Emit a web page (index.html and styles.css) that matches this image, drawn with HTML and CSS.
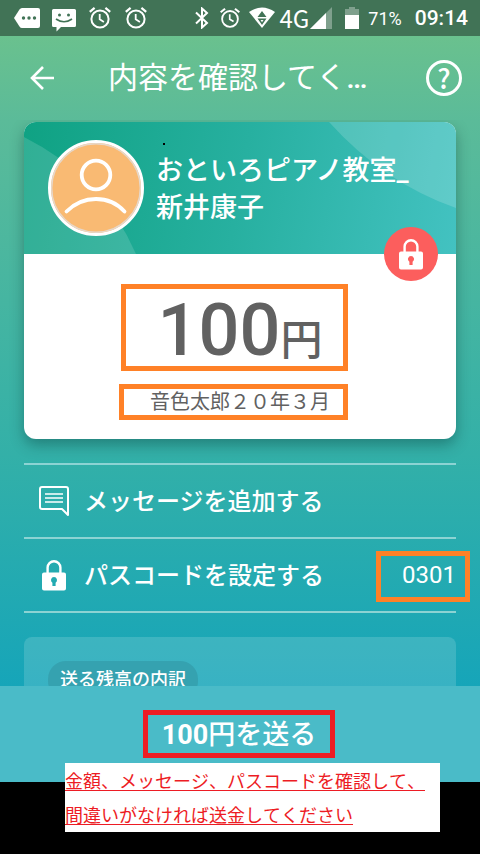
FILE: index.html
```html
<!DOCTYPE html>
<html lang="ja">
<head>
<meta charset="utf-8">
<meta name="viewport" content="width=device-width, initial-scale=1">
<title>内容を確認してください</title>
<link rel="stylesheet" href="styles.css">
</head>
<body>
<svg class="sprite" width="0" height="0" aria-hidden="true">
  <symbol id="alarm" viewBox="0 0 24 24">
    <circle cx="12" cy="13" r="8.6" fill="none" stroke="currentColor" stroke-width="2"/>
    <path d="M1.8 5.800 6.600 1.800M22.200 5.800 17.400 1.800" fill="none" stroke="currentColor" stroke-width="2.200"/>
    <path d="M11.700 8v5.300l4.200 2.600" fill="none" stroke="currentColor" stroke-width="1.800"/>
  </symbol>
  <symbol id="lock" viewBox="0 0 24 31">
    <path d="M5.600 14V7.600a6.400 6.400 0 0 1 12.800 0V14" fill="none" stroke="currentColor" stroke-width="2.400"/>
    <path fill="currentColor" fill-rule="evenodd" d="M2 12.500h20a2 2 0 0 1 2 2V28.500a2 2 0 0 1-2 2H2a2 2 0 0 1-2-2V14.500a2 2 0 0 1 2-2ZM12 17a3.100 3.100 0 0 0-1.600 5.700V26h3.200v-3.300A3.100 3.100 0 0 0 12 17Z"/>
  </symbol>
</svg>
<div class="status">
  <div class="notices">
    <svg width="26" height="20" viewBox="0 0 26 20"><path fill="#fff" d="M8 0h16a2 2 0 0 1 2 2v16a2 2 0 0 1-2 2H8q-1.500 0-2.500-1.500L0 10 5.500 1.500Q6.500 0 8 0Z"/><g fill="#417356"><circle cx="9.500" cy="10" r="1.700"/><circle cx="15" cy="10" r="1.700"/><circle cx="20.500" cy="10" r="1.700"/></g></svg>
    <svg class="sms" width="24" height="23" viewBox="0 0 24 23"><path fill="#fff" d="M1.500 0h21A1.500 1.500 0 0 1 24 1.500v15a1.500 1.500 0 0 1-1.500 1.500H9l-4.500 4.500V18h-3A1.500 1.500 0 0 1 0 16.500v-15A1.500 1.500 0 0 1 1.500 0Z"/><circle cx="7.500" cy="6" r="1.500" fill="#417356"/><circle cx="16.500" cy="6" r="1.500" fill="#417356"/><path d="M4 10q8 5.500 16 0" fill="none" stroke="#417356" stroke-width="1.700"/></svg>
    <svg width="24" height="24"><use href="#alarm"/></svg>
    <svg width="24" height="24"><use href="#alarm"/></svg>
  </div>
  <div class="system">
    <svg width="14" height="22" viewBox="0 0 14 22"><path d="M1 5.500 12 16l-5 4.500V1.500L12 6 1 16.500" fill="none" stroke="#fff" stroke-width="2"/></svg>
    <svg class="clock" width="22" height="24"><use href="#alarm"/></svg>
    <svg class="wifi" width="26" height="22" viewBox="0 0 26 22"><path fill="#fff" d="M0 5Q13-4 26 5L13 21Z"/><path fill="#417356" d="m13 4 4.500 6h-9ZM8.500 11.500h9L13 18Z"/><path fill="#fff" d="M11.500 13h3L13 15.200Z"/></svg>
    <span class="net">4G</span>
    <svg width="22" height="22" viewBox="0 0 22 22"><path fill="#7fa08d" d="M22 0v22H0Z"/><path fill="#fff" d="M16 6v16H0Z"/></svg>
    <svg class="battery" width="14" height="22" viewBox="0 0 14 22"><path fill="#7fa08d" d="M4 0h6v2h4v6H0V2h4Z"/><path fill="#fff" d="M0 8h14v14H0Z"/></svg>
    <span class="percent">71%</span>
    <time class="time">09:14</time>
  </div>
</div>
<header class="bar">
  <button class="back" aria-label="戻る"><svg width="24" height="24" viewBox="0 0 24 24"><path d="M24 12H2M13 1 2 12l11 11" fill="none" stroke="#fff" stroke-width="2.600"/></svg></button>
  <h1>内容を確認してく<b>…</b></h1>
  <button class="help" aria-label="ヘルプ">?</button>
</header>
<main>
  <section class="card">
    <div class="payee">
      <svg class="waves" viewBox="0 0 432 132" preserveAspectRatio="none" aria-hidden="true"><path fill="#fff" fill-opacity=".14" d="M0 15Q78 54 112 132H0Z"/><path fill="#fff" fill-opacity=".16" d="M305 0Q360 61 432 86V0Z"/></svg>
      <svg class="avatar" width="96" height="96" viewBox="0 0 96 96"><circle cx="48" cy="48" r="46.500" fill="#f9ba73" stroke="#fff" stroke-width="3"/><circle cx="48" cy="48" r="44.300" fill="none" stroke="#e6d8cb" stroke-width="1.400"/><circle cx="48" cy="35" r="14.300" fill="none" stroke="#fff" stroke-width="3.800"/><path d="M18.500 71.500Q31 59 48 59T76.500 71.500" fill="none" stroke="#fff" stroke-width="3.800" stroke-linecap="round"/></svg>
      <h2>おといろピアノ教室_<br>新井康子</h2>
      <span class="badge"><svg width="24" height="31"><use href="#lock"/></svg></span>
    </div>
    <div class="detail">
      <p class="amount">100<span>円</span></p>
      <p class="memo">音色太郎２０年３月</p>
    </div>
  </section>
  <div class="options">
    <button class="option">
      <svg width="30" height="31" viewBox="0 0 30 31"><path d="M3 1h24a2 2 0 0 1 2 2v26l-6-6H3a2 2 0 0 1-2-2V3a2 2 0 0 1 2-2Z" fill="none" stroke="#fff" stroke-width="2" stroke-linejoin="round"/><path d="M6 8h18M6 12h18M6 16h18" stroke="#fff" stroke-width="1.500"/></svg>
      <span class="label">メッセージを追加する</span>
    </button>
    <button class="option">
      <svg width="30" height="31"><use href="#lock"/></svg>
      <span class="label">パスコードを設定する</span>
      <span class="code">0301</span>
    </button>
  </div>
  <section class="balance"><h3>送る残高の内訳</h3></section>
</main>
<footer>
  <button class="send"><span><b>100</b>円を送る</span></button>
  <p class="note"><span>金額、メッセージ、パスコードを確認して、<br>間違いがなければ送金してください</span></p>
  <div class="nav"></div>
</footer>
</body>
</html>
```
FILE: styles.css
```css
*, *::before, *::after { box-sizing: border-box; margin: 0; padding: 0; }
body {
  height: 100vh;
  display: flex;
  flex-direction: column;
  overflow: hidden;
  color: #fff;
  font-family: Roboto, "Noto Sans CJK JP", sans-serif;
  background: linear-gradient(#6ac18e 36px, #5bbb99 120px, #33b0a8 455px, #16a5b9 686px);
}
button { border: 0; background: none; color: inherit; font: inherit; cursor: pointer; }
svg { display: block; flex: none; }
.sprite { position: absolute; }

.status {
  flex: none;
  height: 36px;
  padding: 0 12px 0 14px;
  display: flex;
  align-items: center;
  justify-content: space-between;
  background: #417356;
}
.notices, .system { display: flex; align-items: center; }
.notices { gap: 12px; }
.notices .sms { margin-top: 4px; }
.clock { margin-left: 10px; }
.wifi { margin-left: 8px; }
.net { margin: 0 1px 0 4px; font: 24px/36px "Noto Sans CJK JP", sans-serif; }
.battery { margin-left: 13px; }
.percent { margin-left: 9px; font-size: 18px; }
.time { margin-left: 13px; font-size: 21px; font-weight: 500; }

.bar {
  flex: none;
  height: 84px;
  padding: 0 18px 0 30px;
  display: flex;
  align-items: center;
}
.bar h1 {
  flex: 1;
  margin-left: 54px;
  font-size: 30px;
  line-height: 40px;
  font-weight: 400;
}
.bar b { font-weight: 500; }
.help {
  width: 36px;
  height: 36px;
  border: 3px solid #fff;
  border-radius: 50%;
  font: 500 27px/28px "Noto Sans CJK JP", sans-serif;
}

main { flex: 1; min-height: 0; padding: 2px 24px 0; overflow: hidden; }
.card {
  border-radius: 12px;
  background: #fff;
  box-shadow: 0 6px 14px rgba(0, 40, 40, .35);
}
.payee {
  position: relative;
  height: 132px;
  padding: 0 24px;
  display: flex;
  align-items: center;
  gap: 12px;
  border-radius: 12px 12px 0 0;
  background: linear-gradient(100deg, #0fa283, #27b0a0 50%, #43c2c1);
}
.waves { position: absolute; inset: 0; width: 100%; height: 100%; border-radius: inherit; }
.avatar { position: relative; }
.payee h2 {
  position: relative;
  padding-top: 4px;
  font-size: 27px;
  line-height: 37px;
  font-weight: 500;
  white-space: nowrap;
}
.payee h2::before {
  content: "";
  position: absolute;
  left: 7px;
  top: -6px;
  width: 2px;
  height: 2px;
  background: #000;
}
.badge {
  position: absolute;
  right: 18px;
  bottom: -27px;
  width: 54px;
  height: 54px;
  display: grid;
  place-items: center;
  border-radius: 50%;
  background: #fc5e5d;
}
.detail { padding: 30px 0 19px; text-align: center; color: #616161; }
.amount, .memo { position: relative; }
.amount { height: 87px; font-size: 72px; line-height: 94px; font-weight: 500; }
.amount span { font-size: 42px; }
.memo { height: 36px; margin-top: 13px; font-size: 20px; line-height: 36px; }
.amount::after, .memo::after {
  content: "";
  position: absolute;
  inset: 0 108px 0 97px;
  border: 5px solid #ff8127;
}
.memo::after { left: 95px; }

.options { margin-top: 24px; border-top: 2px solid #8cd3d3; }
.option {
  position: relative;
  width: 100%;
  height: 74px;
  padding: 0 0 0 15px;
  display: flex;
  align-items: center;
  gap: 15px;
  border-bottom: 2px solid #8cd3d3;
  font-size: 24px;
  font-weight: 500;
}
.label { padding-bottom: 4px; }
.code { margin-left: auto; font-weight: 400; }
.code::after {
  content: "";
  position: absolute;
  right: -14px;
  top: 12px;
  width: 94px;
  height: 51px;
  border: 5px solid #ff8127;
}
.balance {
  height: 200px;
  margin-top: 24px;
  padding: 24px;
  border-radius: 8px;
  background: rgba(255, 255, 255, .15);
}
.balance h3 {
  display: inline-block;
  padding: 0 12px;
  border-radius: 18px;
  background: #35a2b0;
  font-size: 18px;
  line-height: 38px;
  font-weight: 500;
}

footer { position: relative; flex: none; }
.send {
  display: grid;
  place-items: center;
  width: 100%;
  height: 96px;
  padding-right: 2px;
  background: #4abbc8;
  font-size: 27px;
  font-weight: 500;
}
.send span {
  width: 192px;
  height: 48px;
  border: 5px solid #ed1c24;
  line-height: 40px;
}
.send b { font-weight: 700; }
.note {
  position: absolute;
  left: 65px;
  right: 40px;
  top: 77px;
  height: 69px;
  background: #fff;
  color: #ed1c24;
  font: 18px/34px "Noto Sans CJK JP", sans-serif;
  font-kerning: none;
  white-space: nowrap;
}
.note span { text-decoration: underline; text-decoration-thickness: 1px; text-underline-offset: 2px; }
.nav { height: 72px; background: #000; }
```
